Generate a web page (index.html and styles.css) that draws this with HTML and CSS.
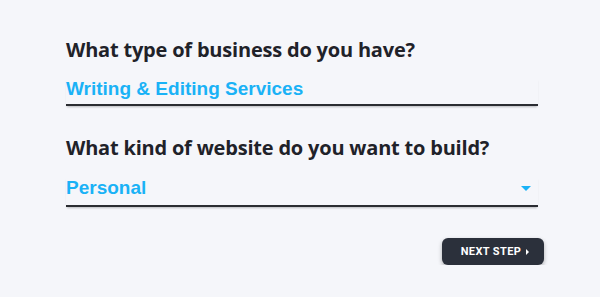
FILE: index.html
```html
<!DOCTYPE html>
<html>
<head>
<meta charset="utf-8">
<link rel="stylesheet" href="styles.css">
</head>
<body>
<div class="form">
  <div class="field">
    <h2 class="label">What type of business do you have?</h2>
    <div class="input">Writing &amp; Editing Services</div>
  </div>
  <div class="field">
    <h2 class="label">What kind of website do you want to build?</h2>
    <div class="input select">
      <span>Personal</span>
      <span class="caret"></span>
    </div>
  </div>
  <div class="actions">
    <button class="next">NEXT STEP <span class="arrow"></span></button>
  </div>
</div>
</body>
</html>
```
FILE: styles.css
```css
html, body {
  margin: 0;
  padding: 0;
  background: #f5f6fa;
}
.form {
  width: 472px;
  margin-left: 66px;
  padding-top: 37px;
}
.field {
  margin-bottom: 29px;
}
.label {
  margin: 0;
  font-family: "Open Sans", Lato, sans-serif;
  font-weight: 700;
  font-size: 20px;
  line-height: 26px;
  letter-spacing: -0.2px;
  color: #1f2229;
}
.input {
  margin-top: 15px;
  font-family: "Liberation Sans", Arial, sans-serif;
  font-weight: 700;
  font-size: 19px;
  line-height: 22px;
  color: #1ab2f6;
  padding-bottom: 4px;
  border-bottom: 2px solid #2a2c31;
  box-shadow: 0 2px 2px -1px rgba(0,0,0,0.25);
}
.select {
  display: flex;
  justify-content: space-between;
  align-items: center;
  margin-top: 16px;
  padding-bottom: 6px;
}
.caret {
  width: 0;
  height: 0;
  border-left: 5px solid transparent;
  border-right: 5px solid transparent;
  border-top: 5px solid #1ab2f6;
  margin-right: 7px;
}
.actions {
  display: flex;
  justify-content: flex-end;
  margin-right: -6px;
  padding-top: 2px;
}
.next {
  width: 102px;
  height: 27px;
  border: none;
  border-radius: 6px;
  background: #2b303b;
  color: #fff;
  font-family: Roboto, "Liberation Sans", sans-serif;
  font-weight: 700;
  font-size: 11px;
  letter-spacing: 0.4px;
  display: flex;
  align-items: center;
  justify-content: center;
  gap: 5px;
  padding: 0 0 0 4px;
  box-shadow: 0 2px 4px rgba(0,0,0,0.3);
}
.arrow {
  width: 0;
  height: 0;
  border-top: 3px solid transparent;
  border-bottom: 3px solid transparent;
  border-left: 3px solid #fff;
}
```
